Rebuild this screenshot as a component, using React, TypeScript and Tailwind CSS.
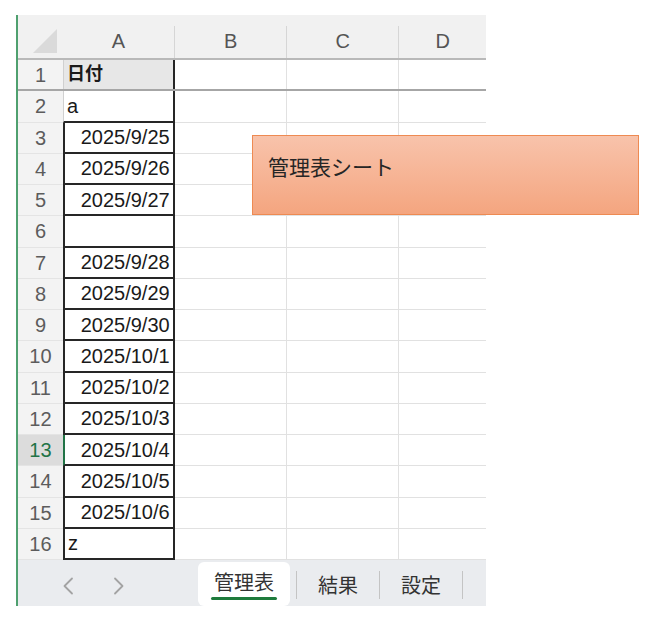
import React from 'react';

type Row = { n: number; v: string; kind: 'head' | 'text' | 'date' | 'empty' };

const rows: Row[] = [
  { n: 1, v: '日付', kind: 'head' },
  { n: 2, v: 'a', kind: 'text' },
  { n: 3, v: '2025/9/25', kind: 'date' },
  { n: 4, v: '2025/9/26', kind: 'date' },
  { n: 5, v: '2025/9/27', kind: 'date' },
  { n: 6, v: '', kind: 'empty' },
  { n: 7, v: '2025/9/28', kind: 'date' },
  { n: 8, v: '2025/9/29', kind: 'date' },
  { n: 9, v: '2025/9/30', kind: 'date' },
  { n: 10, v: '2025/10/1', kind: 'date' },
  { n: 11, v: '2025/10/2', kind: 'date' },
  { n: 12, v: '2025/10/3', kind: 'date' },
  { n: 13, v: '2025/10/4', kind: 'date' },
  { n: 14, v: '2025/10/5', kind: 'date' },
  { n: 15, v: '2025/10/6', kind: 'date' },
  { n: 16, v: 'z', kind: 'text' },
];

const SELECTED_ROW = 13;

const ColHeader: React.FC<{ label: string; width: string; last?: boolean }> = ({ label, width, last }) => (
  <div className={`${width} h-full flex flex-col`}>
    <div className="h-[13px]" />
    <div
      className={`flex-1 flex items-center justify-center pb-[2px] text-[20px] text-[#555] ${
        last ? '' : 'border-r border-[#d6d6d6]'
      }`}
    >
      {label}
    </div>
  </div>
);

const SheetRow: React.FC<{ row: Row }> = ({ row }) => {
  const selected = row.n === SELECTED_ROW;
  const isFirst = row.n === 1;
  const darkLeft = row.n >= 3;
  const rowLine = isFirst ? 'border-b-2 border-[#a6a6a6]' : 'border-b border-[#e1e1e1]';

  return (
    <div className={`flex h-[31.25px] ${isFirst ? 'border-b-2 border-[#a6a6a6]' : ''}`}>
      <div
        className={`w-[45px] flex items-center justify-center text-[20px] ${
          selected ? 'bg-[#dcdcdc] text-[#217346]' : 'bg-[#f3f3f3] text-[#5c5c5c]'
        } ${isFirst ? '' : 'border-b border-[#e4e4e4]'}`}
      >
        {row.n}
      </div>
      <div
        className={`w-[112px] flex items-center border-r-2 border-r-[#262626] ${
          isFirst ? 'bg-[#e7e7e7] border-l border-l-[#d0d0d0]' : 'bg-white border-b-2 border-b-[#262626]'
        } ${darkLeft ? (selected ? 'border-l-2 border-l-[#217346]' : 'border-l-2 border-l-[#262626]') : !isFirst ? 'border-l border-l-[#d0d0d0]' : ''} ${
          row.kind === 'date' ? 'justify-end pr-[3px] text-[20px]' : 'pl-[3px]'
        } ${row.kind === 'head' ? 'font-bold text-[18px]' : ''} ${row.kind === 'text' ? 'text-[20px]' : ''} text-[#1a1a1a]`}
      >
        {row.v}
      </div>
      <div className={`w-[113px] border-r border-[#e1e1e1] ${isFirst ? '' : rowLine}`} />
      <div className={`w-[112px] border-r border-[#e1e1e1] ${isFirst ? '' : rowLine}`} />
      <div className={`w-[87px] ${isFirst ? '' : rowLine}`} />
    </div>
  );
};

const Chevron: React.FC<{ dir: 'left' | 'right' }> = ({ dir }) => (
  <svg width="12" height="18" viewBox="0 0 12 18" fill="none" stroke="#a3a3a3" strokeWidth="1.8" strokeLinecap="round" strokeLinejoin="round">
    {dir === 'left' ? <path d="M10 1.5 2.5 9l7.5 7.5" /> : <path d="M2 1.5 9.5 9 2 16.5" />}
  </svg>
);

export default function App() {
  return (
    <div
      className="relative w-[652px] h-[627px] bg-white overflow-hidden"
      style={{ fontFamily: '"Liberation Sans", "Noto Sans CJK JP", sans-serif' }}
    >
      <div className="ml-[16px] pt-[15px] w-[470px]">
        <div className="border-l-2 border-[#4fa06f]">
          {/* column headers */}
          <div className="flex h-[45px] bg-[#f1f1f1] border-b-2 border-[#b9b9b9]">
            <div className="w-[45px] h-full flex items-end justify-end pr-[6px] pb-[5px]">
              <svg width="24" height="24" viewBox="0 0 24 24">
                <polygon points="24,0 24,24 0,24" fill="#dadada" />
              </svg>
            </div>
            <ColHeader label="A" width="w-[112px]" />
            <ColHeader label="B" width="w-[113px]" />
            <ColHeader label="C" width="w-[112px]" />
            <ColHeader label="D" width="w-[87px]" last />
          </div>

          {rows.map((r) => (
            <SheetRow key={r.n} row={r} />
          ))}

          {/* sheet tabs */}
          <div className="flex items-stretch h-[46px] bg-[#eaecef]">
            <div className="w-[180px] flex items-center pl-[44px] gap-[39px] pt-[6px]">
              <Chevron dir="left" />
              <Chevron dir="right" />
            </div>
            <div className="w-[92px] mt-[2px] bg-white rounded-[6px] flex flex-col items-center pt-[8px]">
              <span className="text-[20px] text-[#333] leading-[26px]">管理表</span>
              <div className="mt-[1px] w-[66px] h-[3px] bg-[#1e7b3c] rounded-full" />
            </div>
            <div className="w-[6px]" />
            <div className="flex items-center pt-[4px]">
              <div className="w-px h-[28px] bg-[#c4c4c4]" />
              <div className="w-[82px] flex justify-center pt-[2px] text-[20px] text-[#333]">結果</div>
              <div className="w-px h-[28px] bg-[#c4c4c4]" />
              <div className="w-[82px] flex justify-center pt-[2px] text-[20px] text-[#333]">設定</div>
              <div className="w-px h-[28px] bg-[#c4c4c4]" />
            </div>
          </div>
        </div>
      </div>

      {/* floating shape */}
      <div className="absolute left-[252px] top-[135px] w-[387px] h-[80px] border border-[#ee8a52] bg-gradient-to-b from-[#f8c3ab] to-[#f4a57f] pl-[15px] pt-[16px]">
        <span className="text-[21px] text-[#262626]">管理表シート</span>
      </div>
    </div>
  );
}
